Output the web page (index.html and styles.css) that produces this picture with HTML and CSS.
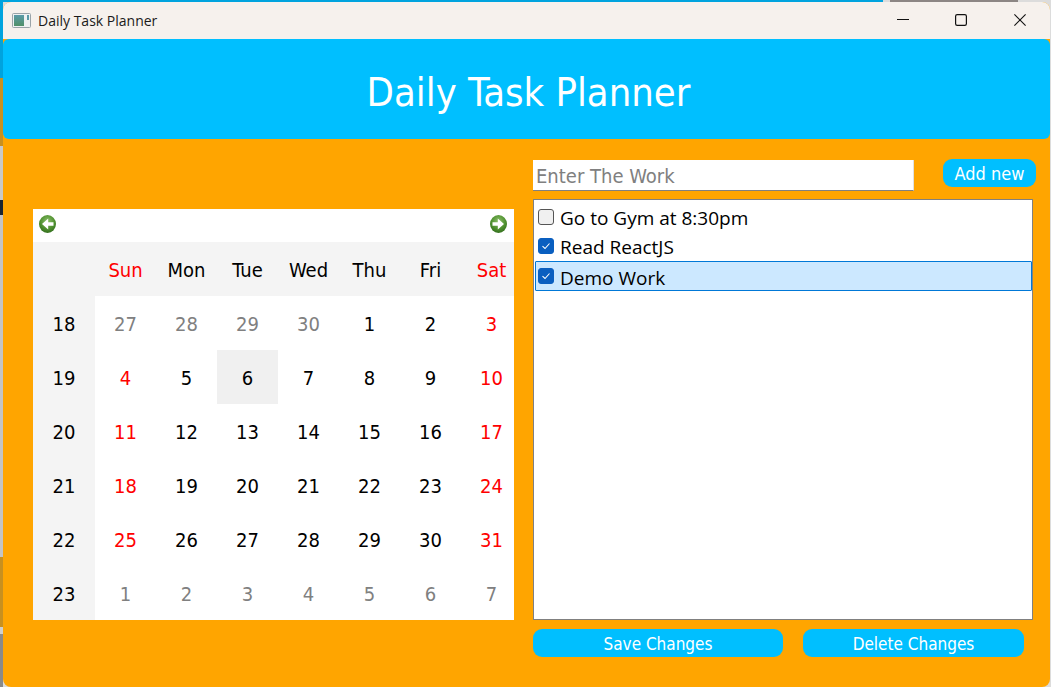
FILE: index.html
```html
<!DOCTYPE html>
<html lang="en">
<head>
<meta charset="utf-8">
<title>Daily Task Planner</title>
<link rel="stylesheet" href="styles.css">
</head>
<body>
<svg class="defs" width="0" height="0">
  <defs>
    <radialGradient id="ball" cx="50%" cy="35%" r="70%"><stop offset="0" stop-color="#8cc06a"/><stop offset="0.6" stop-color="#4e8f2e"/><stop offset="1" stop-color="#2f6a1c"/></radialGradient>
    <linearGradient id="pane" x1="0" y1="0" x2="0" y2="1"><stop offset="0" stop-color="#5a9aa8"/><stop offset="1" stop-color="#4f9068"/></linearGradient>
  </defs>
</svg>
<div class="window">
  <div class="titlebar">
    <svg class="appicon" width="19" height="15" viewBox="0 0 19 15"><rect x="0.5" y="0.5" width="18" height="14" rx="1" fill="#eef1f2" stroke="#9aa3a8"/><rect x="2" y="2" width="10" height="11" fill="url(#pane)"/><rect x="15" y="2" width="2" height="5" fill="#5a9aa8"/></svg>
    <span class="wintitle">Daily Task Planner</span>
    <div class="controls">
      <svg class="minimize" width="12" height="12" viewBox="0 0 12 12"><path d="M0 5.5H12" stroke="#111" stroke-width="1"/></svg>
      <svg width="12" height="12" viewBox="0 0 12 12"><rect x="0.6" y="0.6" width="10.8" height="10.8" rx="1.6" fill="none" stroke="#111" stroke-width="1.2"/></svg>
      <svg width="12" height="12" viewBox="0 0 12 12"><path d="M0.4 0.4L11.6 11.6M11.6 0.4L0.4 11.6" stroke="#111" stroke-width="1.1"/></svg>
    </div>
  </div>
  <header class="banner">Daily Task Planner</header>
  <main class="content">
    <section class="calendar">
      <div class="calnav">
        <svg width="17" height="18" viewBox="0 0 17 18"><ellipse cx="8.5" cy="9" rx="8.5" ry="9" fill="url(#ball)"/><path d="M14.5 7.3H9.2V3.6L3 9L9.2 14.4V10.7H14.5Z" fill="#fff"/></svg>
        <svg width="17" height="18" viewBox="0 0 17 18"><ellipse cx="8.5" cy="9" rx="8.5" ry="9" fill="url(#ball)"/><path d="M2.5 7.3H7.8V3.6L14 9L7.8 14.4V10.7H2.5Z" fill="#fff"/></svg>
      </div>
      <div class="calgrid">
        <div class="head"></div><div class="head red">Sun</div><div class="head">Mon</div><div class="head">Tue</div><div class="head">Wed</div><div class="head">Thu</div><div class="head">Fri</div><div class="head red">Sat</div>
        <div class="week">18</div><div class="day grey">27</div><div class="day grey">28</div><div class="day grey">29</div><div class="day grey">30</div><div class="day">1</div><div class="day">2</div><div class="day red">3</div>
        <div class="week">19</div><div class="day red">4</div><div class="day">5</div><div class="day today">6</div><div class="day">7</div><div class="day">8</div><div class="day">9</div><div class="day red">10</div>
        <div class="week">20</div><div class="day red">11</div><div class="day">12</div><div class="day">13</div><div class="day">14</div><div class="day">15</div><div class="day">16</div><div class="day red">17</div>
        <div class="week">21</div><div class="day red">18</div><div class="day">19</div><div class="day">20</div><div class="day">21</div><div class="day">22</div><div class="day">23</div><div class="day red">24</div>
        <div class="week">22</div><div class="day red">25</div><div class="day">26</div><div class="day">27</div><div class="day">28</div><div class="day">29</div><div class="day">30</div><div class="day red">31</div>
        <div class="week">23</div><div class="day grey">1</div><div class="day grey">2</div><div class="day grey">3</div><div class="day grey">4</div><div class="day grey">5</div><div class="day grey">6</div><div class="day grey">7</div>
      </div>
    </section>
    <section class="tasks">
      <div class="addrow">
        <input class="workinput" type="text" placeholder="Enter The Work">
        <button class="btn addbtn">Add new</button>
      </div>
      <div class="tasklist">
        <div class="task"><span class="check"></span><span class="label">Go to Gym at 8:30pm</span></div>
        <div class="task"><span class="check on"><svg width="10" height="10" viewBox="0 0 10 10"><path d="M1.5 5.2L4 7.5L8.5 2.5" fill="none" stroke="#fff" stroke-width="1.1"/></svg></span><span class="label">Read ReactJS</span></div>
        <div class="task selected"><span class="check on"><svg width="10" height="10" viewBox="0 0 10 10"><path d="M1.5 5.2L4 7.5L8.5 2.5" fill="none" stroke="#fff" stroke-width="1.1"/></svg></span><span class="label">Demo Work</span></div>
      </div>
      <div class="actions">
        <button class="btn savebtn">Save Changes</button>
        <button class="btn delbtn">Delete Changes</button>
      </div>
    </section>
  </main>
</div>
</body>
</html>
```
FILE: styles.css
```css
* { box-sizing: border-box; }
html, body { margin: 0; height: 100%; overflow: hidden; }
body {
  padding: 2px 1px 0 3px;
  background-color: #dcdcdc;
  background-image:
    linear-gradient(to right, #00a3de 0 883px, #dcdcdc 883px 890px, #8c8684 890px 1018px, #dcdcdc 1018px),
    linear-gradient(to bottom, #00a3de 0 78px, #c8901f 78px 146px, #c9c9c9 146px 200px, #1a2430 200px 215px, #c4c4c4 215px 557px, #c8901f 557px 627px, #cfcfcf 627px 634px, #8a8a8a 634px);
  background-size: 100% 2px, 3px 100%;
  background-repeat: no-repeat;
}
.defs { position: absolute; }
.window { height: 685px; display: flex; flex-direction: column; background: #ffa500; border-radius: 8px; overflow: hidden; }
.titlebar { height: 37px; flex: none; background: #f6f1ed; display: flex; align-items: center; padding-left: 9px; font: 14px "Open Sans", "Noto Sans", sans-serif; color: #1a1a1a; }
.appicon { margin-right: 7px; }
.wintitle { flex: 1; }
.controls { display: flex; align-items: center; gap: 47px; padding: 0 24px 1px 0; }
.minimize { margin-right: -1px; }
.banner { height: 100px; flex: none; background: #00bfff; color: #fff; font: 39.6px "DejaVu Sans Condensed", "DejaVu Sans", sans-serif; font-stretch: condensed; display: flex; align-items: center; justify-content: center; padding: 5px 0 0 4px; border-radius: 6px; }
.content { flex: 1; display: flex; padding: 21px 0 0 30px; gap: 19px; font-family: "DejaVu Sans", sans-serif; font-stretch: condensed; }
.calendar { width: 481px; height: 411px; margin-top: 49px; overflow: hidden; background: #fff; flex: none; }
.calnav { height: 33px; display: flex; align-items: center; justify-content: space-between; padding: 0 7px 3px 6px; }
.calgrid { display: grid; grid-template-columns: 62px repeat(7, 61px); grid-auto-rows: 54px; width: 489px; font-size: 20px; color: #000; }
.calgrid > div { display: flex; align-items: center; justify-content: center; padding-top: 2px; }
.head, .week { background: #f4f4f4; }
.red { color: #f00; }
.grey { color: #808080; }
.today { background: #f0f0f0; }
.tasks { width: 503px; flex: none; display: flex; flex-direction: column; }
.addrow { display: flex; justify-content: space-between; align-items: flex-start; height: 31px; }
.workinput { width: 381px; height: 31px; border: 0; border-right: 1px solid #e0e0e0; border-bottom: 1px solid #808080; padding: 2px 3px 0; font: 20px "DejaVu Sans", sans-serif; font-stretch: condensed; background: #fff; }
.workinput::placeholder { color: #808080; opacity: 1; }
.btn { background: #00bfff; color: #fff; border: 0; border-radius: 9px; font: 17px "DejaVu Sans", sans-serif; font-stretch: condensed; padding: 2px 0 0; height: 28px; }
.addbtn { width: 93px; margin-top: -1px; font-size: 18px; padding-top: 0; }
.tasklist { height: 421px; margin-top: 8px; width: 500px; background: #fff; border: 1px solid #808080; padding: 2px 0 0 1px; font: 19px "Open Sans", "Noto Sans", sans-serif; color: #000; }
.task { height: 29px; display: flex; align-items: center; padding-left: 2px; border: 1px solid transparent; }
.label { padding-top: 3px; }
.selected { height: 30px; margin-top: 1px; background: #cce8ff; border-color: #0078d7; border-radius: 1px; }
.check { width: 16px; height: 16px; margin-right: 6px; border: 1px solid #555; border-radius: 3px; background: #f0f0f0; display: flex; align-items: center; justify-content: center; flex: none; }
.check.on { background: #0a5fc0; border-color: #0a5fc0; }
.actions { display: flex; margin-top: 9px; gap: 20px; }
.savebtn { width: 250px; }
.delbtn { width: 221px; }
```
